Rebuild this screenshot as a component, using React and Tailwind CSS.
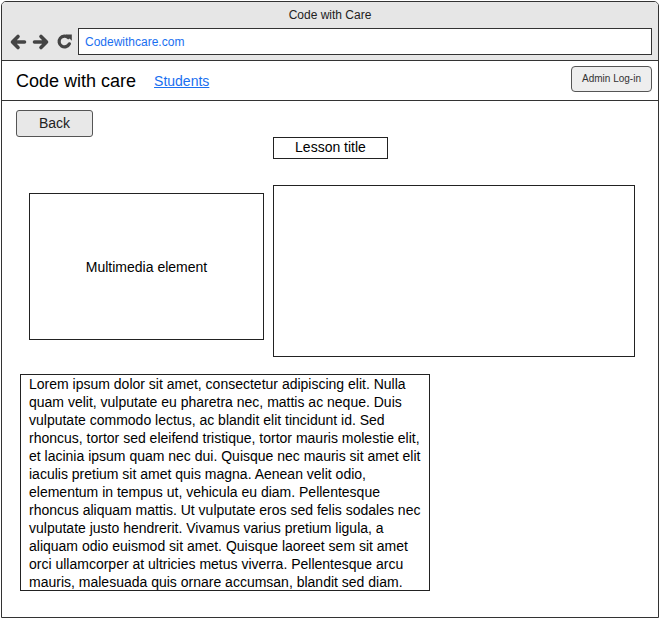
import React from 'react';

const lorem =
    'Lorem ipsum dolor sit amet, consectetur adipiscing elit. Nulla quam velit, vulputate eu pharetra nec, mattis ac neque. Duis vulputate commodo lectus, ac blandit elit tincidunt id. Sed rhoncus, tortor sed eleifend tristique, tortor mauris molestie elit, et lacinia ipsum quam nec dui. Quisque nec mauris sit amet elit iaculis pretium sit amet quis magna. Aenean velit odio, elementum in tempus ut, vehicula eu diam. Pellentesque rhoncus aliquam mattis. Ut vulputate eros sed felis sodales nec vulputate justo hendrerit. Vivamus varius pretium ligula, a aliquam odio euismod sit amet. Quisque laoreet sem sit amet orci ullamcorper at ultricies metus viverra. Pellentesque arcu mauris, malesuada quis ornare accumsan, blandit sed diam.';

// bold browser-style arrow, points left by default
const Arrow = ({ flip }) => (
    <svg viewBox="0 0 18 18" className={`w-[18px] h-[18px] ${flip ? 'scale-x-[-1]' : ''}`}>
        <path d="M15.5 9 H3.5 M9 3.5 L3.5 9 L9 14.5" fill="none" stroke="#444" strokeWidth="3.6" strokeLinecap="round" strokeLinejoin="round" />
    </svg>
);

const Reload = () => (
    <svg viewBox="0 0 17 17" className="w-[17px] h-[17px]">
        <path d="M13.4 10.8 A5.4 5.4 0 1 1 12.3 4.6" fill="none" stroke="#444" strokeWidth="3.2" strokeLinecap="round" />
        <path d="M9.6 1.5 L15.8 1.5 L15.8 7.7 Z" fill="#444" />
    </svg>
);

const App = () => {
    return (
        <div className="w-[663px] h-[620px] bg-white pt-px pl-px font-['Liberation_Sans',Arial,sans-serif] text-black">
            <div className="w-[658px] h-[617px] border border-[#333] rounded-t-[5px] flex flex-col overflow-hidden">
                {/* Browser chrome */}
                <div className="h-[59px] shrink-0 bg-[#e6e6e6] border-b border-[#333] flex flex-col">
                    <div className="h-[26px] flex items-center justify-center text-[12px] text-[#222]">Code with Care</div>
                    <div className="flex items-center pl-[7px] pr-[6px]">
                        <div className="flex items-center gap-[5px]">
                            <Arrow />
                            <Arrow flip />
                            <div className="ml-[1px]"><Reload /></div>
                        </div>
                        <div className="ml-[5px] flex-1 h-[27px] bg-white border border-[#333] flex items-center pl-[6px] text-[12px] text-[#1a6ff0]">
                            Codewithcare.com
                        </div>
                    </div>
                </div>

                {/* Site header */}
                <div className="h-[40px] shrink-0 border-b border-[#333] flex items-center pl-[14px] pr-[6px]">
                    <span className="text-[18px] mt-[2px]">Code with care</span>
                    <a href="#" className="ml-[18px] text-[14px] text-[#1a6ff0] underline mt-[1px]">Students</a>
                    <button className="ml-auto mb-[4px] w-[81px] h-[26px] rounded-[4px] border border-[#555] bg-[#eeeeee] text-[10px] text-[#333]">
                        Admin Log-in
                    </button>
                </div>

                {/* Page body */}
                <div className="flex-1 flex flex-col pl-[14px]">
                    <button className="mt-[9px] w-[77px] h-[27px] rounded-[3px] border border-[#555] bg-[#e8e8e8] text-[14px] text-[#222]">
                        Back
                    </button>
                    <div className="ml-[257px] w-[115px] h-[22px] border border-[#222] flex items-center justify-center text-[14px] pb-[2px]">
                        Lesson title
                    </div>
                    <div className="mt-[26px] flex items-start">
                        <div className="ml-[13px] mt-[8px] w-[235px] h-[147px] border border-[#222] flex items-center justify-center text-[14px] pt-[2px]">
                            Multimedia element
                        </div>
                        <div className="ml-[9px] w-[362px] h-[172px] border border-[#222]" />
                    </div>
                    <div className="mt-[17px] ml-[4px] w-[410px] h-[217px] border border-[#222] pl-[8px] pr-[4px] text-[14px] leading-[18px]">
                        {lorem}
                    </div>
                </div>
            </div>
        </div>
    );
};

export default App;
